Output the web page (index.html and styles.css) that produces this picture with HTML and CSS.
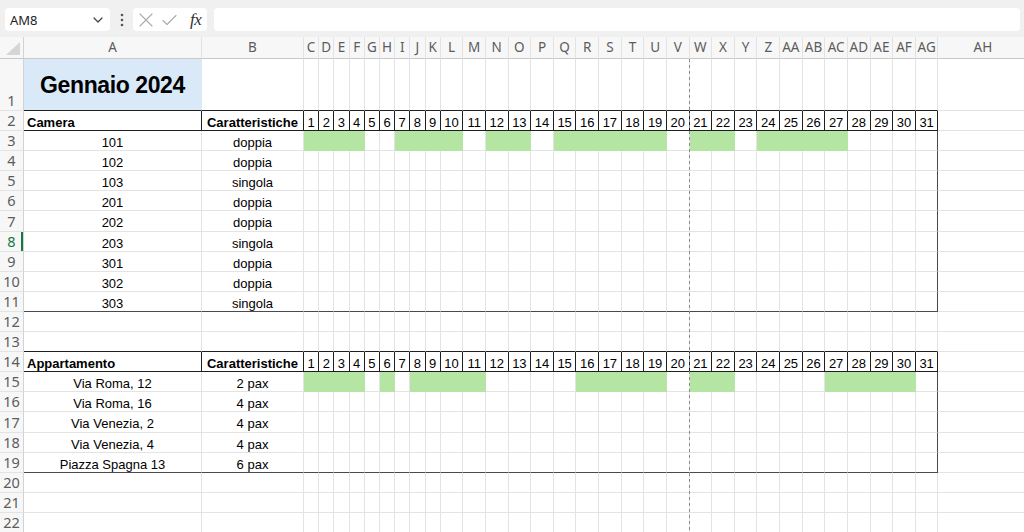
FILE: index.html
```html
<!DOCTYPE html>
<html lang="it">
<head>
<meta charset="utf-8">
<title>Gennaio 2024</title>
<link rel="stylesheet" href="styles.css">
</head>
<body>
<div class="app">
  <div class="fbar">
    <div class="namebox">
      <span class="ref">AM8</span>
      <svg class="chev" width="10" height="6" viewBox="0 0 10 6"><path d="M1 1l4 4 4-4" fill="none" stroke="#404040" stroke-width="1.2" stroke-linecap="round" stroke-linejoin="round"/></svg>
    </div>
    <div class="dots">
      <svg width="4" height="14" viewBox="0 0 4 14"><circle cx="2" cy="2" r="1.3" fill="#555"/><circle cx="2" cy="7" r="1.3" fill="#555"/><circle cx="2" cy="12" r="1.3" fill="#555"/></svg>
    </div>
    <div class="fnbox">
      <svg class="ico-x" width="14" height="14" viewBox="0 0 14 14"><path d="M1 1L13 13M13 1L1 13" fill="none" stroke="#ababab" stroke-width="1.1" stroke-linecap="round"/></svg>
      <svg class="ico-ok" width="15" height="12" viewBox="0 0 15 12"><path d="M1 6.5L5 10.5L14 1.5" fill="none" stroke="#ababab" stroke-width="1.1" stroke-linecap="round" stroke-linejoin="round"/></svg>
      <span class="fx">fx</span>
    </div>
    <div class="finput"></div>
  </div>
  <div class="sheet" id="sheet">
    <div class="pagebreak"></div>
  </div>
</div>
<script src="script.js"></script>
</body>
</html>
```

FILE: styles.css
```css
* { box-sizing: border-box; margin: 0; padding: 0; }
html, body { width: 1024px; height: 532px; overflow: hidden; background: #fff; }
body { font-family: "Liberation Sans", Arial, sans-serif; font-size: 13px; color: #000; }

.fbar {
  height: 37px;
  background: #f0f0f0;
  display: flex;
  align-items: center;
  padding: 2px 4px 0 5px;
}
.namebox {
  width: 105px;
  height: 23px;
  background: #fff;
  border-radius: 4px;
  display: flex;
  align-items: center;
  justify-content: space-between;
  padding: 0 7px 0 5px;
  font-family: "Noto Sans", "Open Sans", sans-serif;
  font-size: 13px;
  color: #242424;
}
.dots { width: 23px; display: flex; justify-content: center; align-items: center; }
.fnbox {
  width: 74px;
  height: 23px;
  background: #fff;
  border-radius: 4px;
  display: flex;
  align-items: center;
  padding: 0 0 0 6px;
}
.ico-ok { margin-left: 9px; }
.fx {
  margin-left: 13px;
  font-family: "Liberation Serif", "Times New Roman", serif;
  font-style: italic;
  font-size: 17px;
  color: #303030;
  letter-spacing: -0.5px;
}
.finput {
  flex: 1;
  height: 23px;
  background: #fff;
  border-radius: 4px;
  margin-left: 7px;
}

.sheet {
  position: relative;
  display: grid;
  grid-template-columns: 24px 178px 102px repeat(9, 15.19px) repeat(22, 22.636px) 90px;
  grid-template-rows: 22px 52px repeat(21, 20.1px);
}
.pagebreak {
  position: absolute;
  top: 22px;
  bottom: 0;
  left: calc(24px + 178px + 102px + 9 * 15.19px + 11 * 22.636px - 1px);
  width: 1px;
  background: repeating-linear-gradient(to bottom, #8c8c8c 0 3px, transparent 3px 6px);
  z-index: 2;
}

.corner {
  background: #f7f7f7;
  border-right: 1px solid #d2d2d2;
  border-bottom: 1px solid #c8c8c8;
  display: flex;
  align-items: flex-end;
  justify-content: flex-end;
  padding: 0 3px 3px 0;
}
.ch {
  background: #f7f7f7;
  border-right: 1px solid #e3e3e3;
  border-bottom: 1px solid #c8c8c8;
  font-family: "Noto Sans", "Open Sans", sans-serif;
  font-size: 13.5px;
  color: #5c5c5c;
  text-align: center;
  line-height: 21px;
  white-space: nowrap;
  overflow: hidden;
}
.rh {
  background: #f7f7f7;
  border-right: 1px solid #d2d2d2;
  border-bottom: 1px solid #e3e3e3;
  font-family: "Noto Sans", "Open Sans", sans-serif;
  font-size: 14.5px;
  color: #5c5c5c;
  display: flex;
  align-items: flex-end;
  justify-content: center;
  line-height: 19px;
}
.rh.sel { color: #107c41; box-shadow: inset -2px 0 0 #107c41; }

.c {
  border-right: 1px solid #e3e3e3;
  border-bottom: 1px solid #e3e3e3;
  white-space: nowrap;
  line-height: 19px;
  padding-top: 2px;
}
.c.mid { text-align: center; }
.c.th {
  border-right-color: #1f1f1f;
  border-bottom-color: #1f1f1f;
  text-align: center;
}
.c.th.left { text-align: left; padding-left: 3px; font-weight: bold; }
.c.th.bold { font-weight: bold; }
.c.green { background: #b4e5a2; border-right-color: #b4e5a2; border-bottom-color: #b4e5a2; }
.c.title {
  background: #dae9f8;
  border-right-color: #dae9f8;
  display: flex;
  align-items: center;
  justify-content: center;
  padding-top: 1px;
  font-size: 23px;
  font-weight: bold;
  letter-spacing: -0.4px;
  line-height: 27px;
}
.c.tb { border-bottom-color: #1f1f1f; }
.c.bb { border-bottom-color: #4a4a4a; }
.c.rb { border-right-color: #4a4a4a; }
```

FILE: script.js
```js
(function () {
  var cols = ['A','B','C','D','E','F','G','H','I','J','K','L','M','N','O','P','Q','R','S','T','U','V','W','X','Y','Z','AA','AB','AC','AD','AE','AF','AG','AH'];
  var sheet = document.getElementById('sheet');

  function add(cls, text) {
    var d = document.createElement('div');
    d.className = cls;
    if (text !== undefined && text !== null && text !== '') d.textContent = String(text);
    sheet.appendChild(d);
    return d;
  }

  var corner = add('corner');
  corner.innerHTML = '<svg width="14" height="13" viewBox="0 0 14 13"><path d="M14 0V13H0Z" fill="#d6d6d6"/></svg>';
  cols.forEach(function (c) { add('ch', c); });

  var data = {
    3: ['101', 'doppia'], 4: ['102', 'doppia'], 5: ['103', 'singola'],
    6: ['201', 'doppia'], 7: ['202', 'doppia'], 8: ['203', 'singola'],
    9: ['301', 'doppia'], 10: ['302', 'doppia'], 11: ['303', 'singola'],
    15: ['Via Roma, 12', '2 pax'], 16: ['Via Roma, 16', '4 pax'],
    17: ['Via Venezia, 2', '4 pax'], 18: ['Via Venezia, 4', '4 pax'],
    19: ['Piazza Spagna 13', '6 pax']
  };
  var green = {
    3: [1,2,3,4,7,8,9,10,12,13,15,16,17,18,19,21,22,24,25,26,27],
    15: [1,2,3,4,6,8,9,10,11,16,17,18,19,21,22,27,28,29,30]
  };
  var headers = { 2: 'Camera', 14: 'Appartamento' };
  var lastRows = { 11: true, 19: true };
  var aboveHeader = { 1: true, 13: true };

  for (var r = 1; r <= 22; r++) {
    add('rh' + (r === 8 ? ' sel' : ''), r);
    var inTable = (r >= 3 && r <= 11) || (r >= 15 && r <= 19);
    for (var i = 0; i < cols.length; i++) {
      var cls = 'c';
      var text = '';
      var day = i - 1;
      if (i <= 32) {
        if (r === 1 && i === 0) { cls += ' title'; text = 'Gennaio 2024'; }
        if (aboveHeader[r]) cls += ' tb';
        if (headers[r]) {
          cls += ' th';
          if (i === 0) { cls += ' left'; text = headers[r]; }
          else if (i === 1) { cls += ' bold'; text = 'Caratteristiche'; }
          else { text = day; }
        } else if (inTable) {
          if (i < 2) { cls += ' mid'; text = data[r][i]; }
          else if (green[r] && green[r].indexOf(day) >= 0) { cls += ' green'; }
          if (i === 32) cls += ' rb';
          if (lastRows[r]) cls += ' bb';
        }
      }
      add(cls, text);
    }
  }
})();
```
